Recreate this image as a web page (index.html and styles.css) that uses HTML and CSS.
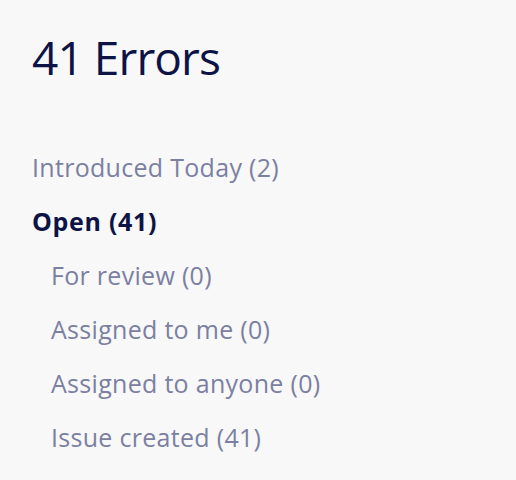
FILE: index.html
```html
<!DOCTYPE html>
<html>
<head>
<meta charset="utf-8">
<link rel="stylesheet" href="styles.css">
</head>
<body>
<div class="panel">
  <h1 class="title">41 Errors</h1>
  <ul class="filters">
    <li class="item">Introduced Today (2)</li>
    <li class="item active">Open (41)</li>
    <li class="item sub">For review (0)</li>
    <li class="item sub">Assigned to me (0)</li>
    <li class="item sub">Assigned to anyone (0)</li>
    <li class="item sub">Issue created (41)</li>
  </ul>
</div>
</body>
</html>
```
FILE: styles.css
```css
html, body {
  margin: 0;
  padding: 0;
  background: #f8f8f9;
  font-family: "Open Sans", sans-serif;
}
.panel {
  padding: 30px 0 0 32px;
}
.title {
  margin: 0 0 55px 0;
  font-size: 46px;
  line-height: 55px;
  font-weight: 400;
  letter-spacing: -0.9px;
  color: #0d1445;
}
.filters {
  list-style: none;
  margin: 0;
  padding: 0;
}
.item {
  font-size: 25px;
  line-height: 54px;
  letter-spacing: 0.3px;
  color: #7b80a1;
}
.item.active {
  color: #0d1445;
  font-weight: 700;
  letter-spacing: 0.7px;
}
.item.sub {
  padding-left: 19px;
}
```
